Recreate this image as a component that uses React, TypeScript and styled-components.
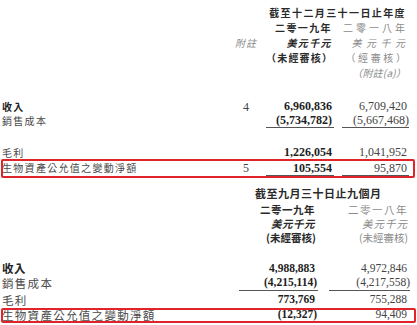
import React from "react";
import styled, { createGlobalStyle } from "styled-components";

const GlobalStyle = createGlobalStyle`
  html, body {
    margin: 0;
    padding: 0;
    background: #ffffff;
  }
  body {
    width: 417px;
    height: 325px;
    overflow: hidden;
    font-family: "Liberation Serif", "Noto Sans CJK TC", serif;
    color: #333333;
  }
`;

const Page = styled.div`
  display: flex;
  flex-direction: column;
  width: 417px;
`;

const Section = styled.div<{ $cols: string; $pr: number }>`
  display: grid;
  grid-template-columns: ${(p) => p.$cols};
  padding: 0 ${(p) => p.$pr}px 0 2px;
`;

const Line = styled.div<{ $h?: number; $mt?: number }>`
  grid-column: 1 / -1;
  display: grid;
  grid-template-columns: subgrid;
  align-items: center;
  height: ${(p) => p.$h ?? 15}px;
  margin-top: ${(p) => p.$mt ?? 0}px;
`;

// red highlight drawn over the row, doesn't affect the columns
const Boxed = styled(Line)`
  position: relative;
  &::after {
    content: "";
    position: absolute;
    left: -1px;
    right: -6px;
    top: -1px;
    bottom: -2px;
    border: 2px solid #e0242a;
    border-radius: 2px;
    pointer-events: none;
  }
`;

const Head = styled.div<{ $col: string; $bold?: boolean; $italic?: boolean; $light?: boolean; $ls?: number; $fs?: number; $align?: string; $mr?: number; $ml?: number }>`
  grid-column: ${(p) => p.$col};
  font-family: "Noto Sans CJK TC", sans-serif;
  font-size: ${(p) => p.$fs ?? 10}px;
  font-weight: ${(p) => (p.$bold ? 700 : 400)};
  font-style: ${(p) => (p.$italic ? "italic" : "normal")};
  letter-spacing: ${(p) => p.$ls ?? 1.4}px;
  color: ${(p) => (p.$light ? "#8a8a8a" : "#2a2a2a")};
  text-align: ${(p) => p.$align ?? "right"};
  margin-right: ${(p) => p.$mr ?? 0}px;
  margin-left: ${(p) => p.$ml ?? 0}px;
  white-space: nowrap;
  line-height: 1;
`;

const Label = styled.div<{ $bold?: boolean; $fs?: number; $ls?: number }>`
  grid-column: 1;
  font-family: "Noto Sans CJK TC", sans-serif;
  font-size: ${(p) => p.$fs ?? 10}px;
  font-weight: ${(p) => (p.$bold ? 700 : 400)};
  letter-spacing: ${(p) => p.$ls ?? 1.3}px;
  color: ${(p) => (p.$bold ? "#222222" : "#4a4a4a")};
  white-space: nowrap;
  line-height: 1;
`;

const Note = styled.div`
  grid-column: 2;
  text-align: center;
  font-size: 12px;
  color: #444444;
  line-height: 1;
`;

const Num = styled.div<{ $col: number; $bold?: boolean; $rule?: boolean; $pr: number; $fs?: number }>`
  grid-column: ${(p) => p.$col};
  align-self: stretch;
  display: flex;
  align-items: center;
  justify-content: flex-end;
  padding-right: ${(p) => p.$pr}px;
  font-size: ${(p) => p.$fs ?? 12}px;
  font-weight: ${(p) => (p.$bold ? 700 : 400)};
  color: ${(p) => (p.$bold ? "#1e1e1e" : "#444444")};
  border-bottom: 1px solid ${(p) => (p.$rule ? "#555555" : "transparent")};
  line-height: 1;
`;

const TOP = "1fr 40px 68px 8px 67px";
const BOTTOM = "1fr 79px 11px 81px";

export default function App() {
  return (
    <Page>
      <GlobalStyle />
      <Section $cols={TOP} $pr={8}>
        <Line $h={15} $mt={5}>
          <Head $col="3 / -1" $bold $mr={3}>截至十二月三十一日止年度</Head>
        </Line>
        <Line $h={15}>
          <Head $col="3" $bold $mr={2}>二零一九年</Head>
          <Head $col="5" $light $ls={3} $mr={1}>二零一八年</Head>
        </Line>
        <Line $h={15}>
          <Head $col="2" $italic $light $align="center" $ls={1}>附註</Head>
          <Head $col="3" $italic $bold $mr={2}>美元千元</Head>
          <Head $col="5" $italic $light $ls={4.5} $mr={-0.5}>美元千元</Head>
        </Line>
        <Line $h={15}>
          <Head $col="3" $bold $mr={1} $ls={1.2}>（未經審核）</Head>
          <Head $col="5" $light $mr={0.5} $ls={2.6}>（經審核）</Head>
        </Line>
        <Line $h={15}>
          <Head $col="5" $italic $light $mr={3} $ls={0.2}>（附註(a)）</Head>
        </Line>

        <Line $h={13} $mt={20}>
          <Label $bold>收入</Label>
          <Note>4</Note>
          <Num $col={3} $bold $pr={2}>6,960,836</Num>
          <Num $col={5} $pr={2}>6,709,420</Num>
        </Line>
        <Line $h={15}>
          <Label>銷售成本</Label>
          <Num $col={3} $bold $rule $pr={2}>(5,734,782)</Num>
          <Num $col={5} $rule $pr={0}>(5,667,468)</Num>
        </Line>
        <Line $h={13} $mt={18}>
          <Label>毛利</Label>
          <Num $col={3} $bold $pr={2}>1,226,054</Num>
          <Num $col={5} $pr={2}>1,041,952</Num>
        </Line>
        <Boxed $h={16} $mt={1}>
          <Label>生物資產公允值之變動淨額</Label>
          <Note>5</Note>
          <Num $col={3} $bold $rule $pr={2}>105,554</Num>
          <Num $col={5} $rule $pr={2}>95,870</Num>
        </Boxed>
      </Section>

      <Section $cols={BOTTOM} $pr={7}>
        <Line $h={16} $mt={9}>
          <Head $col="2 / -1" $bold $fs={11} $ls={0.5} $align="left" $ml={16}>
            截至九月三十日止九個月
          </Head>
        </Line>
        <Line $h={15} $mt={2}>
          <Head $col="2" $bold $fs={10.5} $ls={0.5} $mr={3}>二零一九年</Head>
          <Head $col="4" $light $fs={10.5} $ls={1.5} $mr={2}>二零一八年</Head>
        </Line>
        <Line $h={13}>
          <Head $col="2" $bold $italic $fs={10.5} $ls={0.5} $mr={3}>美元千元</Head>
          <Head $col="4" $italic $light $fs={10.5} $ls={1} $mr={2}>美元千元</Head>
        </Line>
        <Line $h={15}>
          <Head $col="2" $bold $fs={10.5} $ls={0} $mr={2}>(未經審核)</Head>
          <Head $col="4" $light $fs={10.5} $ls={0} $mr={2}>(未經審核)</Head>
        </Line>

        <Line $h={14} $mt={16}>
          <Label $bold $fs={11.5} $ls={0.5}>收入</Label>
          <Num $col={2} $bold $pr={3} $fs={11.5}>4,988,883</Num>
          <Num $col={4} $pr={3} $fs={11.5}>4,972,846</Num>
        </Line>
        <Line $h={15}>
          <Label $fs={11.5} $ls={1.3}>銷售成本</Label>
          <Num $col={2} $bold $rule $pr={1} $fs={11.5}>(4,215,114)</Num>
          <Num $col={4} $rule $pr={0} $fs={11.5}>(4,217,558)</Num>
        </Line>
        <Line $h={13} $mt={3}>
          <Label $fs={11.5} $ls={1.3}>毛利</Label>
          <Num $col={2} $bold $pr={3} $fs={11.5}>773,769</Num>
          <Num $col={4} $pr={3} $fs={11.5}>755,288</Num>
        </Line>
        <Boxed $h={12} $mt={2}>
          <Label $fs={11.5} $ls={1.3}>生物資產公允值之變動淨額</Label>
          <Num $col={2} $bold $pr={1} $fs={11.5}>(12,327)</Num>
          <Num $col={4} $pr={3} $fs={11.5}>94,409</Num>
        </Boxed>
      </Section>
    </Page>
  );
}
